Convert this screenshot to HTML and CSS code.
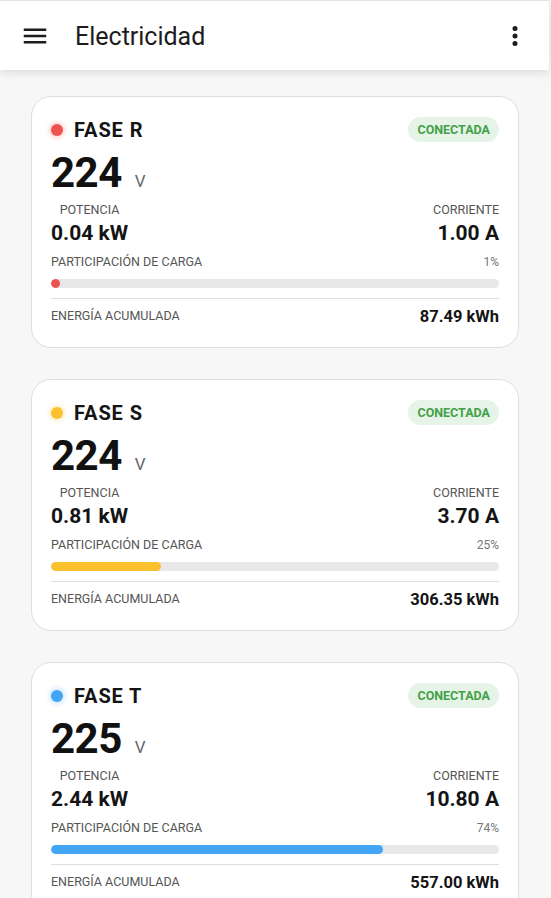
FILE: index.html
```html
<!DOCTYPE html>
<html lang="es">
<head>
<meta charset="utf-8">
<title>Electricidad</title>
<link rel="stylesheet" href="styles.css">
</head>
<body>
<header class="appbar">
  <svg class="icon" viewBox="0 0 24 24" aria-hidden="true"><path d="M3 18h18v-2H3v2zm0-5h18v-2H3v2zm0-7v2h18V6H3z"/></svg>
  <h1 class="title">Electricidad</h1>
  <svg class="icon kebab" viewBox="0 0 24 24" aria-hidden="true"><circle cx="12" cy="6" r="2"/><circle cx="12" cy="12" r="2"/><circle cx="12" cy="18" r="2"/></svg>
</header>
<main class="content">
  <section class="card">
    <div class="card-head">
      <div class="phase"><span class="dot dot-r"></span><span class="phase-name">FASE R</span></div>
      <span class="badge">CONECTADA</span>
    </div>
    <div class="voltage"><span class="volt-num">224</span><span class="volt-unit">V</span></div>
    <div class="metrics">
      <div class="metric metric-left"><span class="label">POTENCIA</span><span class="value">0.04 kW</span></div>
      <div class="metric metric-right"><span class="label">CORRIENTE</span><span class="value">1.00 A</span></div>
    </div>
    <div class="share-row"><span class="label">PARTICIPACIÓN DE CARGA</span><span class="pct">1%</span></div>
    <div class="bar"><div class="fill fill-r" style="width:2%"></div></div>
    <div class="energy"><span class="label">ENERGÍA ACUMULADA</span><span class="energy-val">87.49 kWh</span></div>
  </section>
  <section class="card">
    <div class="card-head">
      <div class="phase"><span class="dot dot-s"></span><span class="phase-name">FASE S</span></div>
      <span class="badge">CONECTADA</span>
    </div>
    <div class="voltage"><span class="volt-num">224</span><span class="volt-unit">V</span></div>
    <div class="metrics">
      <div class="metric metric-left"><span class="label">POTENCIA</span><span class="value">0.81 kW</span></div>
      <div class="metric metric-right"><span class="label">CORRIENTE</span><span class="value">3.70 A</span></div>
    </div>
    <div class="share-row"><span class="label">PARTICIPACIÓN DE CARGA</span><span class="pct">25%</span></div>
    <div class="bar"><div class="fill fill-s" style="width:24.5%"></div></div>
    <div class="energy"><span class="label">ENERGÍA ACUMULADA</span><span class="energy-val">306.35 kWh</span></div>
  </section>
  <section class="card">
    <div class="card-head">
      <div class="phase"><span class="dot dot-t"></span><span class="phase-name">FASE T</span></div>
      <span class="badge">CONECTADA</span>
    </div>
    <div class="voltage"><span class="volt-num">225</span><span class="volt-unit">V</span></div>
    <div class="metrics">
      <div class="metric metric-left"><span class="label">POTENCIA</span><span class="value">2.44 kW</span></div>
      <div class="metric metric-right"><span class="label">CORRIENTE</span><span class="value">10.80 A</span></div>
    </div>
    <div class="share-row"><span class="label">PARTICIPACIÓN DE CARGA</span><span class="pct">74%</span></div>
    <div class="bar"><div class="fill fill-t" style="width:74%"></div></div>
    <div class="energy"><span class="label">ENERGÍA ACUMULADA</span><span class="energy-val">557.00 kWh</span></div>
  </section>
</main>
</body>
</html>
```

FILE: styles.css
```css
* { box-sizing: border-box; }
html, body { margin: 0; padding: 0; }
body {
  background: #f7f7f7;
  font-family: Roboto, "Liberation Sans", Arial, sans-serif;
  color: #141414;
}
.appbar {
  position: relative;
  z-index: 1;
  height: 70px;
  width: 549px;
  background: #fff;
  border-top: 1px solid #e2e2e2;
  display: flex;
  align-items: center;
  padding: 0 21px 0 20px;
  box-shadow: 0 2px 10px rgba(0,0,0,0.13);
}
.icon { width: 30px; height: 30px; fill: #1c1c1c; flex: none; }
.title {
  margin: 1px 0 0 25px;
  font-size: 25px;
  font-weight: 400;
  color: #1c1c1c;
  flex: 1;
}
.kebab { margin-right: -2px; }
.content {
  padding: 26px 32px 20px 31px;
  display: flex;
  flex-direction: column;
  gap: 31px;
}
.card {
  background: #fff;
  border: 1px solid #dedede;
  border-radius: 20px;
  padding: 20px 19px 21px 19px;
  display: flex;
  flex-direction: column;
}
.card-head {
  display: flex;
  align-items: center;
  justify-content: space-between;
  height: 25px;
}
.phase { display: flex; align-items: center; }
.dot {
  width: 12px; height: 12px; border-radius: 50%;
  margin-right: 11px;
}
.dot-r { background: #ef5350; box-shadow: 0 0 4px 2px rgba(239,83,80,0.25); }
.dot-s { background: #fbc02d; box-shadow: 0 0 4px 2px rgba(251,192,45,0.25); }
.dot-t { background: #42a5f5; box-shadow: 0 0 4px 2px rgba(66,165,245,0.25); }
.phase-name { font-size: 20px; font-weight: 700; color: #141414; letter-spacing: 0.9px; }
.badge {
  height: 25px;
  line-height: 25px;
  padding: 0 9px;
  border-radius: 13px;
  background: #e6f4e7;
  color: #43a047;
  font-size: 12.5px;
  font-weight: 700;
}
.voltage {
  margin-top: 10px;
  height: 42px;
  line-height: 42px;
  display: flex;
  align-items: baseline;
}
.volt-num { font-size: 42px; font-weight: 700; color: #111; letter-spacing: -0.5px; }
.volt-unit { font-size: 17px; color: #666; margin-left: 13px; }
.metrics {
  margin-top: 9px;
  display: flex;
  justify-content: space-between;
}
.metric { display: flex; flex-direction: column; gap: 4px; }
.metric-left { align-items: center; }
.metric-right { align-items: flex-end; }
.label {
  font-size: 12.5px;
  line-height: 14px;
  color: #555;
}
.value { font-size: 21px; line-height: 24px; font-weight: 700; color: #141414; }
.share-row {
  margin-top: 10px;
  display: flex;
  justify-content: space-between;
  align-items: baseline;
}
.pct { font-size: 12px; color: #777; }
.bar {
  margin-top: 10px;
  height: 9px;
  border-radius: 5px;
  background: #e8e8e8;
  overflow: hidden;
}
.fill { height: 100%; border-radius: 5px; }
.fill-r { background: #ef5350; }
.fill-s { background: #fbc02d; }
.fill-t { background: #42a5f5; }
.energy {
  margin-top: 10px;
  border-top: 1px solid #dedede;
  padding-top: 7px;
  height: 28px;
  display: flex;
  justify-content: space-between;
  align-items: center;
}
.energy-val { font-size: 16.5px; font-weight: 700; color: #141414; }
```
